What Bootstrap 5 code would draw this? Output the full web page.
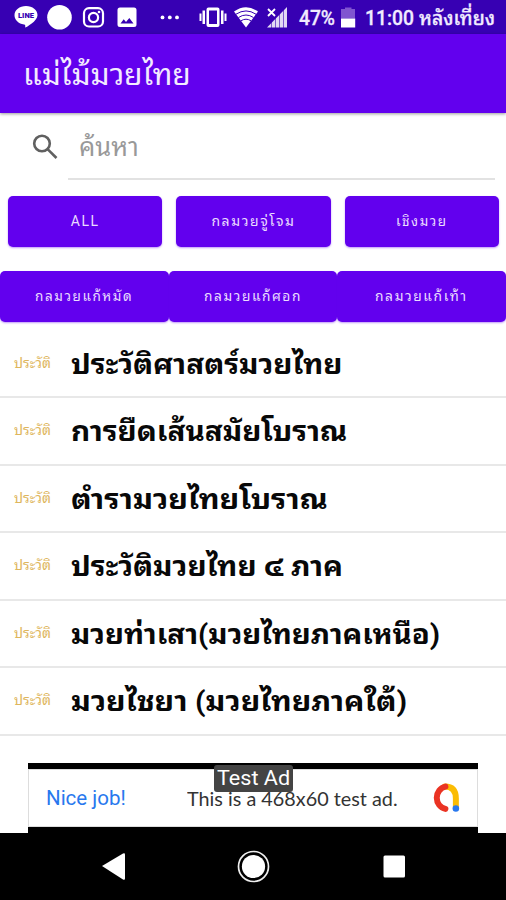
<!DOCTYPE html>
<html lang="th">
<head>
<meta charset="utf-8">
<meta name="viewport" content="width=device-width, initial-scale=1">
<title>แม่ไม้มวยไทย</title>
<link href="https://cdn.jsdelivr.net/npm/bootstrap@5.3.0/dist/css/bootstrap.min.css" rel="stylesheet">
<style>
body{width:506px;height:900px;overflow:hidden;background:#fff;font-family:Roboto,"Noto Sans Thai Looped","Noto Looped Thai","Droid Sans Thai",Loma,Waree,Garuda,"Noto Sans",sans-serif}
body>*{flex-shrink:0}
.status{height:34px;background:#3700b3}
.status svg{display:block;width:506px;height:34px;font-size:20px;font-weight:500}
.appbar{height:79px;background:#6200ee;color:#f3eaff;padding:5px 0 0 23px;font-size:29px;box-shadow:0 1px 3px rgba(0,0,0,.4)}
.search{height:83px;padding:0 11px 0 32px}
.field{height:67px;border-bottom:2px solid #e2e2e2;margin-left:9px;padding-left:11px;font-size:26px;color:#999;line-height:69px}
.filters{height:51px}
.first{padding:0 7px 0 8px;gap:14px}
.second{margin-top:24px}
.filters .btn{flex:1 1 0;min-width:0;padding:0;background:#6200ee;color:#eadcff;border:0;border-radius:5px;font-size:14px;letter-spacing:1.6px;white-space:nowrap;box-shadow:0 1px 2px rgba(98,0,238,.4)}
.topics{margin-top:8.5px}
.topic{height:67.5px;border-bottom:2px solid #e8e8e8}
.kind{width:71px;padding-left:14px;color:#deb65d;font-size:14px;white-space:nowrap}
.topic-name{font-size:28px;font-weight:700;color:#080808;white-space:nowrap;padding-top:3px}
.adwrap{height:97.5px;padding:27.5px 28px 0}
.ad{height:70px;background:#000;padding:6px 0}
.adbody{height:58px;background:#fff;border:1px solid #ddd;padding:0 16px 0 17px;font-size:20px}
.nice{color:#2878ee;width:142px}
.adcopy{color:#333;width:244px;font-family:Lato,sans-serif}
.tag{left:214px;top:29px;width:79px;height:27px;background:#444;color:#fff;border-radius:3px;font-size:21px;line-height:27px;text-align:center}
.navkeys{height:67px;background:#000}
.fit{display:inline-block;transform-origin:0 50%;white-space:nowrap}
</style>
<script src="https://cdn.jsdelivr.net/npm/bootstrap@5.3.0/dist/js/bootstrap.bundle.min.js"></script>
</head>
<body class="d-flex flex-column">
<div class="status">
<svg viewBox="0 0 506 34" fill="#fff">
<path d="M26 6c-6.500 0-11.500 4-11.500 9.200 0 4.700 4 8.500 9.500 9.200 1.500.3 1.300.8 1.200 3.200 1-.3 12.300-6.600 12.300-12.400C37.500 10 32.500 6 26 6z"/>
<text x="18" y="18" font-size="6.500" font-weight="900" fill="#3700b3" textLength="16" lengthAdjust="spacingAndGlyphs">LINE</text>
<circle cx="59.500" cy="17.300" r="12.300"/>
<g fill="none" stroke="#fff" stroke-width="2.200"><rect x="84" y="8.200" width="19" height="18.300" rx="5"/><circle cx="93.500" cy="17.500" r="4.600"/></g><circle cx="99" cy="12" r="1.300"/>
<path fill-rule="evenodd" d="M120 7.500h14q2.500 0 2.500 2.500v14.500q0 2.500-2.500 2.500h-14q-2.500 0-2.500-2.500V10q0-2.500 2.500-2.500zM120.500 23.500h13l-4.200-5.500-3.300 4-2.300-2.700z"/>
<circle cx="162.500" cy="17.400" r="1.900"/><circle cx="169.800" cy="17.400" r="1.900"/><circle cx="177" cy="17.400" r="1.900"/>
<path fill-rule="evenodd" d="M208.500 7.500h9q2 0 2 2v15.500q0 2-2 2h-9q-2 0-2-2V9.500q0-2 2-2zM209 10.500v13.500h8V10.500zM202.500 10.500H205v13.500h-2.500zM199.500 13.500h2v7.500h-2zM221 10.500h2.500v13.500H221zM224.500 13.500h2v7.500h-2z"/>
<path d="M234 11.500q12-8.500 24 0L246 27.500z"/><g fill="none" stroke="#3700b3" stroke-width="1"><path d="M236 14.200q10-6.500 20 0M238.500 17.500q7.500-5 15 0M241 20.800q5-3.200 10 0"/></g>
<path fill-opacity=".85" d="M267 27.500 287 7v20.500z"/><path d="M268 9l7 7M275 9l-7 7" stroke="#fff" stroke-width="1.800"/><path d="M271.500 22v6M275.500 18v10M279.500 14v14M283.500 10v18" stroke="#3700b3" stroke-width=".6"/>
<path fill="#8055d0" d="M345 7.500h6.500V9h3.500v9.500h-14V9h4z"/><path d="M341 18.500h14.200v9H341z"/>
<g fill="#f1ebff" stroke="#f1ebff" stroke-width=".3"><text x="299" y="25" textLength="36" lengthAdjust="spacingAndGlyphs">47%</text>
<text x="365" y="25" textLength="49" lengthAdjust="spacingAndGlyphs">11:00</text>
<text x="419" y="25" textLength="76" lengthAdjust="spacingAndGlyphs">หลังเที่ยง</text></g>
</svg>
</div>
<header class="appbar d-flex align-items-center"><span class="fit" data-w="168">แม่ไม้มวยไทย</span></header>
<div class="search d-flex">
<svg width="27" height="27" viewBox="0 0 27 27" style="margin-top:20px" fill="none" stroke="#606060" stroke-width="2.600"><circle cx="10" cy="10.500" r="7.800"/><path d="M15.800 16.300 24.500 25"/></svg>
<div class="field flex-grow-1"><span class="fit" data-w="60">ค้นหา</span></div>
</div>
<div class="filters first d-flex">
<button class="btn"><span class="fit" data-w="29">ALL</span></button><button class="btn"><span class="fit" data-w="84">กลมวยจู่โจม</span></button><button class="btn"><span class="fit" data-w="52">เชิงมวย</span></button>
</div>
<div class="filters second d-flex">
<button class="btn"><span class="fit" data-w="98">กลมวยแก้หมัด</span></button><button class="btn"><span class="fit" data-w="98">กลมวยแก้ศอก</span></button><button class="btn"><span class="fit" data-w="93">กลมวยแก้เท้า</span></button>
</div>
<main class="topics">
<div class="topic d-flex align-items-center"><span class="kind"><span class="fit" data-w="37">ประวัติ</span></span><span class="topic-name fit" data-w="272">ประวัติศาสตร์มวยไทย</span></div>
<div class="topic d-flex align-items-center"><span class="kind"><span class="fit" data-w="37">ประวัติ</span></span><span class="topic-name fit" data-w="276">การยืดเส้นสมัยโบราณ</span></div>
<div class="topic d-flex align-items-center"><span class="kind"><span class="fit" data-w="37">ประวัติ</span></span><span class="topic-name fit" data-w="257">ตำรามวยไทยโบราณ</span></div>
<div class="topic d-flex align-items-center"><span class="kind"><span class="fit" data-w="37">ประวัติ</span></span><span class="topic-name fit" data-w="272">ประวัติมวยไทย ๔ ภาค</span></div>
<div class="topic d-flex align-items-center"><span class="kind"><span class="fit" data-w="37">ประวัติ</span></span><span class="topic-name fit" data-w="369">มวยท่าเสา(มวยไทยภาคเหนือ)</span></div>
<div class="topic d-flex align-items-center"><span class="kind"><span class="fit" data-w="37">ประวัติ</span></span><span class="topic-name fit" data-w="336">มวยไชยา (มวยไทยภาคใต้)</span></div>
</main>
<div class="adwrap position-relative">
<div class="ad"><div class="adbody d-flex align-items-center"><span class="nice"><span class="fit" data-w="80">Nice job!</span></span><span class="adcopy"><span class="fit" data-w="211">This is a 468x60 test ad.</span></span>
<svg width="31" height="32" viewBox="0 0 31 32" fill="none" stroke-width="6" stroke-linecap="round"><path d="M15 4.500q11 0 11 12v9" stroke="#fbbc04"/><path d="M15.500 4.500a11 11.500 0 0 0 0 22.500" stroke="#ea3323"/><circle cx="26" cy="26.500" r="3.300" fill="#2878ee"/></svg>
</div></div>
<div class="tag position-absolute"><span class="fit" data-w="73">Test Ad</span></div>
</div>
<footer class="navkeys">
<svg class="d-block" width="506" height="67" viewBox="0 0 506 67" fill="#fff"><path d="M102 33 123 20.500q2-1 2 1v24q0 2-2 1z"/><circle cx="253.500" cy="33.500" r="11.600"/><circle cx="253.500" cy="33.500" r="15" fill="none" stroke="#eee" stroke-width="1.700"/><rect x="383.500" y="22.500" width="21.500" height="22" rx="1.500"/></svg>
</footer>
<script>
for (const el of document.querySelectorAll('[data-w]')) {
  const natural = el.offsetWidth;
  const scale = el.dataset.w / natural;
  el.style.transform = `scaleX(${scale})`;
  el.style.marginRight = `${el.dataset.w - natural}px`;
}
</script>
</body>
</html>
